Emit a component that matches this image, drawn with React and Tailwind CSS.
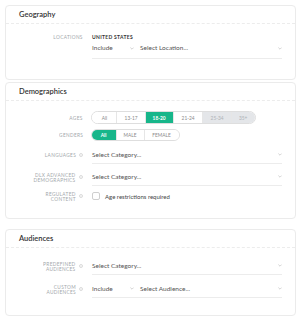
const font = { fontFamily: "Lato, 'Noto Sans', sans-serif" };

function Chevron() {
  return (
    <svg width="4" height="3" viewBox="0 0 4 3" className="shrink-0">
      <polyline points="0.4,0.6 2,2.2 3.6,0.6" fill="none" stroke="#b5b5b5" strokeWidth="0.6" />
    </svg>
  );
}

function Info() {
  return (
    <svg width="4" height="4" viewBox="0 0 4 4" className="shrink-0 ml-[3px]">
      <circle cx="2" cy="2" r="1.5" fill="none" stroke="#c4c4c4" strokeWidth="0.6" />
      <circle cx="2" cy="2" r="0.4" fill="#c4c4c4" />
    </svg>
  );
}

function Label({ lines, info, className = "" }) {
  return (
    <div className={`w-[77px] shrink-0 flex justify-end items-center ${className}`}>
      <div className="text-right text-[6px] leading-[5.5px] tracking-[0.4px] text-[#a3a7ab] uppercase scale-[0.8] origin-right">
        {lines.map((l, i) => (
          <div key={i}>{l}</div>
        ))}
      </div>
      {info && <Info />}
    </div>
  );
}

function Card({ title, children, className = "" }) {
  return (
    <div className={`mx-[5px] border border-[#ebebeb] rounded-[4px] bg-white ${className}`}>
      <div className="h-[18px] flex items-center pl-[13px] border-b border-dashed border-[#ececec]">
        <span className="text-[7.5px] font-semibold text-[#333]">{title}</span>
      </div>
      {children}
    </div>
  );
}

function Select({ text, className = "" }) {
  return (
    <div className={`flex items-center justify-between ${className}`}>
      <span className="text-[6.5px] text-[#555]">{text}</span>
      <Chevron />
    </div>
  );
}

function Segmented({ items, h }) {
  return (
    <div className={`flex ${h} border border-[#dedede] rounded-full overflow-hidden`}>
      {items.map((it, i) => (
        <div
          key={it.t}
          className={`${it.w} flex items-center justify-center ${
            i > 0 ? "border-l border-[#e6e6e6]" : ""
          } ${
            it.on
              ? "bg-[#17b68a] text-white font-bold"
              : it.off
              ? "bg-[#e4e6e9] text-[#aeb2b6]"
              : "bg-white text-[#8a8a8a]"
          }`}
        >
          <span className="text-[6px] scale-[0.8]">{it.t}</span>
        </div>
      ))}
    </div>
  );
}

export default function App() {
  return (
    <div className="w-[301px] h-[320px] bg-white pt-[5px]" style={font}>
      <Card title="Geography">
        <div className="flex pt-[10px] pb-[20px]">
          <Label lines={["Locations"]} className="items-start h-[8px]" />
          <div className="ml-[9px] mr-[13px] flex-1">
            <div className="text-[5px] leading-[6px] font-bold tracking-[0.3px] text-[#333]">UNITED STATES</div>
            <div className="flex mt-[4px] pb-[6px] border-b border-[#ececec]">
              <Select text="Include" className="w-[42px] h-[8px]" />
              <Select text="Select Location..." className="flex-1 ml-[6px] h-[8px]" />
            </div>
          </div>
        </div>
      </Card>

      <Card title="Demographics" className="mt-[2px]">
        <div className="pt-[10px] pb-[15px]">
          <div className="flex h-[13px]">
            <Label lines={["Ages"]} />
            <div className="ml-[8px]">
              <Segmented
                h="h-[13px]"
                items={[
                  { t: "All", w: "w-[24px]" },
                  { t: "13-17", w: "w-[29px]" },
                  { t: "18-20", w: "w-[28px]", on: true },
                  { t: "21-24", w: "w-[29px]" },
                  { t: "25-34", w: "w-[29px]", off: true },
                  { t: "35+", w: "w-[24px]", off: true },
                ]}
              />
            </div>
          </div>
          <div className="flex h-[12px] mt-[5px]">
            <Label lines={["Genders"]} />
            <div className="ml-[8px]">
              <Segmented
                h="h-[12px]"
                items={[
                  { t: "All", w: "w-[24px]", on: true },
                  { t: "MALE", w: "w-[28px]" },
                  { t: "FEMALE", w: "w-[35px]" },
                ]}
              />
            </div>
          </div>
          <div className="flex h-[18px] mt-[5px]">
            <Label lines={["Languages"]} info />
            <Select text="Select Category..." className="ml-[9px] mr-[13px] flex-1 border-b border-[#ececec]" />
          </div>
          <div className="flex h-[18px] mt-[4px]">
            <Label lines={["DLX Advanced", "Demographics"]} info />
            <Select text="Select Category..." className="ml-[9px] mr-[13px] flex-1 border-b border-[#ececec]" />
          </div>
          <div className="flex h-[14px] mt-[3px]">
            <Label lines={["Regulated", "Content"]} info />
            <div className="ml-[9px] flex items-center">
              <div className="w-[8px] h-[8px] border border-[#cfcfcf] rounded-[2px] bg-white" />
              <span className="ml-[5px] text-[6px] text-[#444]">Age restrictions required</span>
            </div>
          </div>
        </div>
      </Card>

      <Card title="Audiences" className="mt-[10px]">
        <div className="pt-[9px] pb-[17px]">
          <div className="flex h-[18px]">
            <Label lines={["Predefined", "Audiences"]} info />
            <Select text="Select Category..." className="ml-[9px] mr-[13px] flex-1 border-b border-[#ececec]" />
          </div>
          <div className="flex h-[18px] mt-[5px]">
            <Label lines={["Custom", "Audiences"]} info />
            <div className="ml-[9px] mr-[13px] flex-1 flex border-b border-[#ececec]">
              <Select text="Include" className="w-[42px]" />
              <Select text="Select Audience..." className="flex-1 ml-[6px]" />
            </div>
          </div>
        </div>
      </Card>
    </div>
  );
}
